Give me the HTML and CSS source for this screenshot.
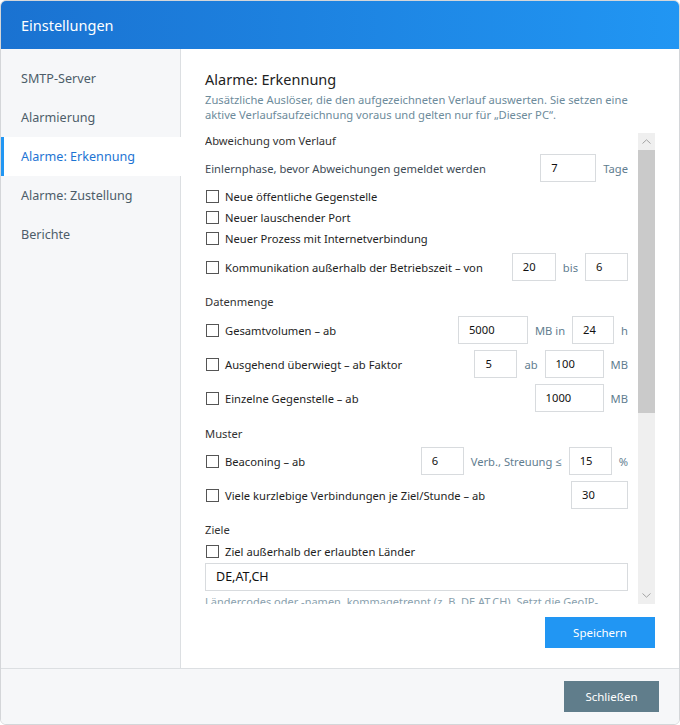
FILE: index.html
```html
<!DOCTYPE html>
<html lang="de">
<head>
<meta charset="utf-8">
<title>Einstellungen</title>
<link rel="stylesheet" href="styles.css">
</head>
<body>
<div class="window">
  <header class="titlebar">Einstellungen</header>
  <div class="main">
    <nav class="sidebar">
      <div class="nav-item">SMTP-Server</div>
      <div class="nav-item">Alarmierung</div>
      <div class="nav-item active">Alarme: Erkennung</div>
      <div class="nav-item">Alarme: Zustellung</div>
      <div class="nav-item">Berichte</div>
    </nav>
    <section class="panel">
      <h1 class="panel-title">Alarme: Erkennung</h1>
      <p class="panel-desc">Zusätzliche Auslöser, die den aufgezeichneten Verlauf auswerten. Sie setzen eine aktive Verlaufsaufzeichnung voraus und gelten nur für „Dieser PC“.</p>
      <div class="scroll">
        <div class="scroll-content">
          <div class="sec-title first">Abweichung vom Verlauf</div>
          <div class="row r-tight">
            <span class="label plain">Einlernphase, bevor Abweichungen gemeldet werden</span>
            <div class="controls">
              <span class="field w56">7</span><span class="unit">Tage</span>
            </div>
          </div>
          <div class="checks">
            <label class="check"><span class="box"></span>Neue öffentliche Gegenstelle</label>
            <label class="check"><span class="box"></span>Neuer lauschender Port</label>
            <label class="check"><span class="box"></span>Neuer Prozess mit Internetverbindung</label>
          </div>
          <div class="row r-komm">
            <label class="check"><span class="box"></span>Kommunikation außerhalb der Betriebszeit – von</label>
            <div class="controls">
              <span class="field w44">20</span><span class="unit">bis</span><span class="field w43">6</span>
            </div>
          </div>

          <div class="sec-title">Datenmenge</div>
          <div class="row">
            <label class="check"><span class="box"></span>Gesamtvolumen – ab</label>
            <div class="controls">
              <span class="field w70">5000</span><span class="unit">MB in</span><span class="field w42">24</span><span class="unit">h</span>
            </div>
          </div>
          <div class="row">
            <label class="check"><span class="box"></span>Ausgehend überwiegt – ab Faktor</label>
            <div class="controls">
              <span class="field w43">5</span><span class="unit">ab</span><span class="field w59">100</span><span class="unit">MB</span>
            </div>
          </div>
          <div class="row">
            <label class="check"><span class="box"></span>Einzelne Gegenstelle – ab</label>
            <div class="controls">
              <span class="field w69">1000</span><span class="unit">MB</span>
            </div>
          </div>

          <div class="sec-title sec-muster">Muster</div>
          <div class="row r-tight">
            <label class="check"><span class="box"></span>Beaconing – ab</label>
            <div class="controls">
              <span class="field w43">6</span><span class="unit">Verb., Streuung ≤</span><span class="field w43">15</span><span class="unit">%</span>
            </div>
          </div>
          <div class="row">
            <label class="check"><span class="box"></span>Viele kurzlebige Verbindungen je Ziel/Stunde – ab</label>
            <div class="controls">
              <span class="field w57">30</span>
            </div>
          </div>

          <div class="sec-title">Ziele</div>
          <label class="check single"><span class="box"></span>Ziel außerhalb der erlaubten Länder</label>
          <div class="field full">DE,AT,CH</div>
          <p class="hint">Ländercodes oder -namen, kommagetrennt (z. B. DE,AT,CH). Setzt die GeoIP-Datenbank voraus.</p>
          <div class="spacer"></div>
        </div>
        <div class="scrollbar">
          <div class="sb-btn"><svg width="9" height="5" viewBox="0 0 9 5"><path d="M0.5 4.5 L4.5 0.8 L8.5 4.5" fill="none" stroke="#a3a3a3" stroke-width="1"/></svg></div>
          <div class="sb-track"><div class="sb-thumb"></div></div>
          <div class="sb-btn"><svg width="9" height="5" viewBox="0 0 9 5"><path d="M0.5 0.5 L4.5 4.2 L8.5 0.5" fill="none" stroke="#a3a3a3" stroke-width="1"/></svg></div>
        </div>
      </div>
      <div class="panel-actions">
        <button class="btn btn-primary">Speichern</button>
      </div>
    </section>
  </div>
  <footer class="footer">
    <button class="btn btn-secondary">Schließen</button>
  </footer>
</div>
</body>
</html>
```
FILE: styles.css
```css
* { box-sizing: border-box; }
html, body { margin: 0; padding: 0; }
body {
  width: 680px;
  height: 725px;
  background: #ffffff;
  font-family: "Segoe UI", "Noto Sans", "Open Sans", sans-serif;
  font-size: 11.2px;
  color: #222;
  overflow: hidden;
}
.window {
  width: 680px;
  height: 725px;
  border: 1px solid #d4d6d9;
  border-radius: 6px;
  overflow: hidden;
  display: flex;
  flex-direction: column;
  background: #fff;
}
.titlebar {
  height: 48px;
  flex: none;
  background: linear-gradient(90deg, #1a72d1 0%, #2196f3 100%);
  color: #fff;
  font-size: 14.5px;
  line-height: 48px;
  padding-left: 20px;
}
.main {
  flex: 1;
  display: flex;
  min-height: 0;
}
.sidebar {
  width: 180px;
  flex: none;
  background: #f6f7f9;
  border-right: 1px solid #dcdfe2;
  padding-top: 10px;
}
.nav-item {
  height: 39px;
  line-height: 39px;
  padding-left: 20px;
  font-size: 12.6px;
  color: #4d5d69;
}
.nav-item.active {
  background: #fff;
  color: #1d74d3;
  border-left: 3px solid #2196f3;
  padding-left: 17px;
  margin-right: -1px;
}
.panel {
  flex: 1;
  display: flex;
  flex-direction: column;
  padding: 20px 24px 0 24px;
  min-width: 0;
}
.panel-title {
  margin: 0;
  font-size: 14.5px;
  font-weight: 400;
  line-height: 20px;
  color: #222;
}
.panel-desc {
  margin: 3px 0 0 0;
  font-size: 11.2px;
  line-height: 15px;
  color: #6d8b9b;
}
.scroll {
  margin-top: 11px;
  height: 471px;
  flex: none;
  display: flex;
}
.scroll-content {
  flex: 1;
  overflow: hidden;
  padding-right: 10px;
}
.sec-title {
  font-size: 11.2px;
  line-height: 16px;
  color: #333;
  margin-top: 13px;
}
.sec-title.first { margin-top: 0; }
.sec-title.sec-muster { margin-top: 14px; }
.row {
  display: flex;
  align-items: center;
  justify-content: space-between;
  height: 28px;
  margin-top: 6px;
}
.row.r-tight { margin-top: 5px; }
.row.r-komm { margin-top: 4px; }
.label.plain { color: #3e4b55; }
.controls {
  display: flex;
  align-items: center;
  gap: 7px;
}
.field {
  display: block;
  height: 28px;
  line-height: 26px;
  border: 1px solid #d8dbde;
  padding-left: 10px;
  color: #111;
  background: #fff;
  font-size: 11.2px;
}
.w42 { width: 42px; }
.w43 { width: 43px; }
.w44 { width: 44px; }
.w56 { width: 56px; }
.w57 { width: 57px; }
.w59 { width: 59px; }
.w69 { width: 69px; }
.w70 { width: 70px; }
.field.full { width: 100%; margin-top: 2px; height: 28px; font-size: 12.5px; }
.unit { color: #5f7d8f; font-size: 11.2px; }
.checks { margin-top: 4px; }
.check {
  display: flex;
  align-items: center;
  height: 21px;
  color: #1e1e1e;
  font-size: 11.2px;
}
.check.single { height: 20px; margin-top: 3px; }
.box {
  width: 13px;
  height: 13px;
  border: 1px solid #555;
  background: #fff;
  margin-left: 1px;
  margin-right: 6px;
  flex: none;
}
.hint {
  margin: 4px 0 0 0;
  font-size: 11px;
  line-height: 14px;
  color: #8aa1ae;
}
.spacer { height: 170px; }
.scrollbar {
  width: 17px;
  flex: none;
  display: flex;
  flex-direction: column;
  background: #efefef;
}
.sb-btn {
  height: 17px;
  flex: none;
  display: flex;
  align-items: center;
  justify-content: center;
}
.sb-track { flex: 1; }
.sb-thumb {
  height: 263px;
  background: #cacaca;
}
.panel-actions {
  display: flex;
  justify-content: flex-end;
  margin-top: 13px;
}
.btn {
  border: none;
  color: #fff;
  font-family: inherit;
  font-size: 11.5px;
  height: 31px;
  padding: 0;
  cursor: pointer;
}
.btn-primary { background: #2196f3; width: 110px; }
.btn-secondary { background: #607d8b; width: 95px; }
.footer {
  height: 56px;
  flex: none;
  border-top: 1px solid #dcdfe2;
  background: #f6f7f9;
  display: flex;
  justify-content: flex-end;
  align-items: flex-start;
  padding: 12px 20px 0 0;
}
```
